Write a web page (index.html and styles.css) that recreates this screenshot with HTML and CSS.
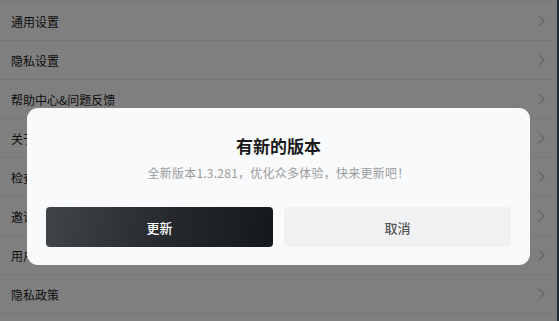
FILE: index.html
```html
<!DOCTYPE html>
<html lang="zh">
<head>
<meta charset="utf-8">
<title>设置</title>
<link rel="stylesheet" href="styles.css">
</head>
<body>
<div class="page">
  <ul class="menu">
    <li class="row"><span>通用设置</span><svg class="chev" viewBox="0 0 7 12"><polyline points="1,1 6,6 1,11"/></svg></li>
    <li class="row"><span>隐私设置</span><svg class="chev" viewBox="0 0 7 12"><polyline points="1,1 6,6 1,11"/></svg></li>
    <li class="row"><span>帮助中心&amp;问题反馈</span><svg class="chev" viewBox="0 0 7 12"><polyline points="1,1 6,6 1,11"/></svg></li>
    <li class="row"><span>关于我们</span><svg class="chev" viewBox="0 0 7 12"><polyline points="1,1 6,6 1,11"/></svg></li>
    <li class="row"><span>检查更新</span><svg class="chev" viewBox="0 0 7 12"><polyline points="1,1 6,6 1,11"/></svg></li>
    <li class="row"><span>邀请好友</span><svg class="chev" viewBox="0 0 7 12"><polyline points="1,1 6,6 1,11"/></svg></li>
    <li class="row"><span>用户协议</span><svg class="chev" viewBox="0 0 7 12"><polyline points="1,1 6,6 1,11"/></svg></li>
    <li class="row"><span>隐私政策</span><svg class="chev" viewBox="0 0 7 12"><polyline points="1,1 6,6 1,11"/></svg></li>
  </ul>
  <div class="mask">
    <div class="dialog">
      <h2 class="title">有新的版本</h2>
      <p class="desc">全新版本1.3.281，优化众多体验，快来更新吧！</p>
      <div class="actions">
        <button class="btn btn-primary">更新</button>
        <button class="btn btn-cancel">取消</button>
      </div>
    </div>
  </div>
</div>
</body>
</html>
```
FILE: styles.css
```css
* { box-sizing: border-box; }
html, body {
  margin: 0;
  padding: 0;
  height: 100%;
  background: #1f2a31;
  font-family: "Noto Sans CJK SC", "Noto Sans", sans-serif;
}
.page {
  position: relative;
  width: 557px;
  height: 321px;
  background: #ffffff;
  overflow: hidden;
  padding-top: 1px;
}
.menu {
  list-style: none;
  margin: 0;
  padding: 0;
  border-top: 1px solid #f0f0f0;
}
.row {
  display: flex;
  align-items: center;
  justify-content: space-between;
  height: 39px;
  padding: 0 12px 0 11px;
  border-bottom: 1px solid #f0f0f0;
  font-size: 12px;
  color: #1a1a1a;
}
.chev {
  width: 7px;
  height: 12px;
  fill: none;
  stroke: #c8c8c8;
  stroke-width: 1.3;
}
.mask {
  position: absolute;
  inset: 0;
  background: rgba(0, 0, 0, 0.5);
  display: flex;
  justify-content: center;
  align-items: flex-start;
  padding-top: 108px;
}
.dialog {
  width: 503px;
  background: #f9fafc;
  border-radius: 11px;
  padding: 25px 19px 18px;
  text-align: center;
}
.title {
  margin: 0;
  font-size: 17px;
  line-height: 26px;
  font-weight: 700;
  color: #1a1a1a;
}
.desc {
  margin: 5px 0 0;
  font-size: 12px;
  line-height: 18px;
  letter-spacing: 0.25px;
  color: #9a9a9a;
}
.actions {
  display: flex;
  gap: 11px;
  margin-top: 25px;
}
.btn {
  flex: 1;
  height: 40px;
  border: 0;
  border-radius: 4px;
  font-family: inherit;
  font-size: 13px;
  font-weight: 500;
}
.btn-primary {
  background: linear-gradient(100deg, #40454a 0%, #25292d 55%, #15181b 100%);
  color: #ffffff;
}
.btn-cancel {
  background: #f0f1f3;
  color: #555555;
}
```
